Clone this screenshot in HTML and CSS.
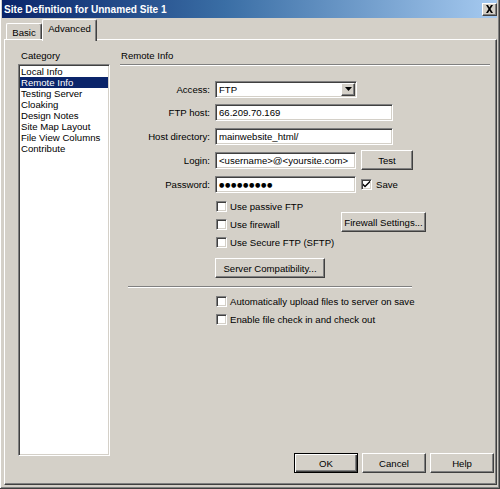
FILE: index.html
```html
<!DOCTYPE html>
<html>
<head>
<meta charset="utf-8">
<title>Site Definition for Unnamed Site 1</title>
<link rel="stylesheet" href="styles.css">
</head>
<body>
<div class="window">
  <div class="titlebar">
    <span class="title">Site Definition for Unnamed Site 1</span>
    <span class="close"><svg width="9" height="8" viewBox="0 0 9 8"><path d="M1 0h2l1.5 2.5L6 0h2L5.5 4 8 8H6L4.5 5.5 3 8H1l2.5-4z" fill="#000"/></svg></span>
  </div>
  <div class="tabs">
    <div class="tab">Basic</div>
    <div class="tab active">Advanced</div>
  </div>
  <div class="panel">
    <div class="left">
      <div class="cat-label">Category</div>
      <ul class="list">
        <li>Local Info</li>
        <li class="sel">Remote Info</li>
        <li>Testing Server</li>
        <li>Cloaking</li>
        <li>Design Notes</li>
        <li>Site Map Layout</li>
        <li>File View Columns</li>
        <li>Contribute</li>
      </ul>
    </div>
    <div class="right">
      <div class="section-title">Remote Info</div>
      <div class="form">
        <label class="lbl">Access:</label>
        <div class="ctl">
          <div class="field select">FTP<span class="arrow"><svg width="7" height="4" viewBox="0 0 7 4"><path d="M0 0h7L3.5 4z" fill="#000"/></svg></span></div>
        </div>
        <label class="lbl">FTP host:</label>
        <div class="ctl"><div class="field wide">66.209.70.169</div></div>
        <label class="lbl">Host directory:</label>
        <div class="ctl"><div class="field wide">mainwebsite_html/</div></div>
        <label class="lbl">Login:</label>
        <div class="ctl"><div class="field mid">&lt;username&gt;@&lt;yoursite.com&gt;</div><button class="btn test">Test</button></div>
        <label class="lbl">Password:</label>
        <div class="ctl"><div class="field mid dots">●●●●●●●●●</div><span class="check-inline"><span class="cb"><svg width="7" height="7" viewBox="0 0 7 7"><path d="M0 2.5l2 2 5-5v2l-5 5-2-2z" fill="#000"/></svg></span>Save</span></div>
      </div>
      <div class="indent">
        <div class="checks-wrap">
          <div class="checks">
            <div class="crow"><span class="cb"></span>Use passive FTP</div>
            <div class="crow"><span class="cb"></span>Use firewall</div>
            <div class="crow"><span class="cb"></span>Use Secure FTP (SFTP)</div>
          </div>
          <button class="btn firewall">Firewall Settings...</button>
        </div>
        <button class="btn compat">Server Compatibility...</button>
      </div>
      <div class="sep"></div>
      <div class="indent bottom-checks">
        <div class="crow"><span class="cb"></span>Automatically upload files to server on save</div>
        <div class="crow"><span class="cb"></span>Enable file check in and check out</div>
      </div>
      <div class="footer">
        <button class="btn dlg default">OK</button>
        <button class="btn dlg">Cancel</button>
        <button class="btn dlg">Help</button>
      </div>
    </div>
  </div>
</div>
</body>
</html>
```
FILE: styles.css
```css
* { box-sizing: border-box; }
html, body { margin: 0; padding: 0; }
body {
  width: 500px;
  height: 489px;
  overflow: hidden;
  background: #d4d0c8;
  font-family: "Liberation Sans", Arial, sans-serif;
  font-size: 9.6px;
  color: #000;
}
.window {
  width: 500px;
  height: 489px;
  display: flex;
  flex-direction: column;
  padding: 0 2px 2px 2px;
  border-right: 1px solid #404040;
  border-bottom: 1px solid #404040;
  box-shadow: inset 1px 0 #fff, inset -1px -1px #808080;
}
.titlebar {
  height: 18px;
  flex: none;
  display: flex;
  align-items: center;
  justify-content: space-between;
  padding-left: 2px;
  background: linear-gradient(to right, #0a246a 0%, #3a6ea5 45%, #a6caf0 100%);
}
.title {
  color: #fff;
  font-weight: bold;
  font-size: 10.1px;
}
.close {
  width: 15px;
  height: 13px;
  display: flex;
  align-items: center;
  justify-content: center;
  background: #d4d0c8;
  border-top: 1px solid #fff;
  border-left: 1px solid #fff;
  border-right: 1px solid #404040;
  border-bottom: 1px solid #404040;
  box-shadow: inset -1px -1px #808080;
}
.tabs {
  flex: none;
  height: 20px;
  margin-top: 1px;
  padding-left: 4px;
  display: flex;
  align-items: flex-end;
}
.tab {
  height: 16px;
  width: 36px;
  border-top: 1px solid #fff;
  border-left: 1px solid #fff;
  border-right: 1px solid #404040;
  box-shadow: inset -1px 0 #808080;
  border-radius: 2px 2px 0 0;
  text-align: center;
  line-height: 15px;
  padding-top: 1px;
}
.tab.active {
  width: 55px;
  height: 22px;
  margin-bottom: -2px;
  line-height: 16px;
  position: relative;
  z-index: 1;
  background: #d4d0c8;
}
.panel {
  flex: 1;
  display: flex;
  margin: 0 0 1px 2px;
  border: 1px solid;
  border-color: #fff #404040 #404040 #fff;
  box-shadow: inset -1px -1px #808080;
}
.left {
  width: 105px;
  flex: none;
  display: flex;
  flex-direction: column;
  padding: 10px 0 28px 13px;
}
.cat-label {
  line-height: 11px;
  padding-left: 3px;
}
.list {
  flex: 1;
  list-style: none;
  margin: 3px 0 0 0;
  padding: 1px 0;
  background: #fff;
  border: 1px solid;
  border-color: #808080 #fff #fff #808080;
  box-shadow: inset 1px 1px #404040, inset -1px -1px #d4d0c8;
}
.list li {
  line-height: 11px;
  margin: 0 1px;
  padding-left: 1px;
  white-space: nowrap;
}
.list li.sel {
  background: #0a246a;
  color: #fff;
}
.right {
  flex: 1;
  display: flex;
  flex-direction: column;
  margin-left: 10px;
  padding: 10px 2px 11px 0;
}
.section-title {
  line-height: 11px;
  padding: 0 0 3px 1px;
  margin-right: 4px;
  border-bottom: 1px solid #808080;
  box-shadow: 0 1px #fff;
}
.form {
  margin-top: 13px;
  display: grid;
  grid-template-columns: 90px auto;
  grid-template-rows: 22px 24px 24px 24px 24px;
  column-gap: 5px;
  align-items: center;
}
.lbl { text-align: right; white-space: nowrap; }
.ctl { display: flex; align-items: center; }
.field {
  height: 17px;
  background: #fff;
  border: 1px solid;
  border-color: #808080 #fff #fff #808080;
  box-shadow: inset 1px 1px #404040, inset -1px -1px #d4d0c8;
  padding: 0 3px;
  line-height: 15px;
  white-space: nowrap;
  overflow: hidden;
  display: flex;
  align-items: center;
}
.select { width: 142px; justify-content: space-between; padding-right: 1px; }
.arrow {
  width: 14px;
  height: 13px;
  display: flex;
  align-items: center;
  justify-content: center;
  background: #d4d0c8;
  border-top: 1px solid #fff;
  border-left: 1px solid #fff;
  border-right: 1px solid #404040;
  border-bottom: 1px solid #404040;
  box-shadow: inset -1px -1px #808080;
}
.wide { width: 178px; }
.mid { width: 141px; }
.dots { font-size: 6.2px; letter-spacing: 0.6px; font-family: "DejaVu Sans", sans-serif; }
.btn {
  font: inherit;
  color: #000;
  background: #d4d0c8;
  border: 1px solid;
  border-color: #fff #404040 #404040 #fff;
  box-shadow: inset -1px -1px #808080;
  padding: 0;
  height: 20px;
  text-align: center;
}
.test { width: 52px; margin-left: 5px; }
.check-inline { display: flex; align-items: center; margin-left: 5px; }
.cb {
  width: 11px;
  height: 11px;
  flex: none;
  background: #fff;
  border: 1px solid;
  border-color: #808080 #fff #fff #808080;
  box-shadow: inset 1px 1px #404040, inset -1px -1px #d4d0c8;
  margin-right: 3px;
  display: flex;
  align-items: center;
  justify-content: center;
}
.check-inline .cb { margin-right: 4px; }
.indent { padding-left: 95px; }
.checks-wrap {
  margin-top: 1px;
  display: flex;
  align-items: center;
}
.checks { width: 126px; }
.crow {
  height: 18px;
  display: flex;
  align-items: center;
  padding-left: 1px;
  white-space: nowrap;
}
.firewall { width: 85px; margin-bottom: 4px; }
.compat { width: 110px; margin-top: 7px; }
.sep {
  margin: 8px 0 0 8px;
  width: 284px;
  height: 2px;
  border-top: 1px solid #808080;
  border-bottom: 1px solid #fff;
}
.bottom-checks { margin-top: 4px; }
.footer {
  margin-top: auto;
  display: flex;
  justify-content: flex-end;
  gap: 4px;
}
.dlg { width: 64px; }
.default {
  border: 1px solid #000;
  box-shadow: inset 1px 1px #fff, inset -1px -1px #404040, inset -2px -2px #808080;
}
```
